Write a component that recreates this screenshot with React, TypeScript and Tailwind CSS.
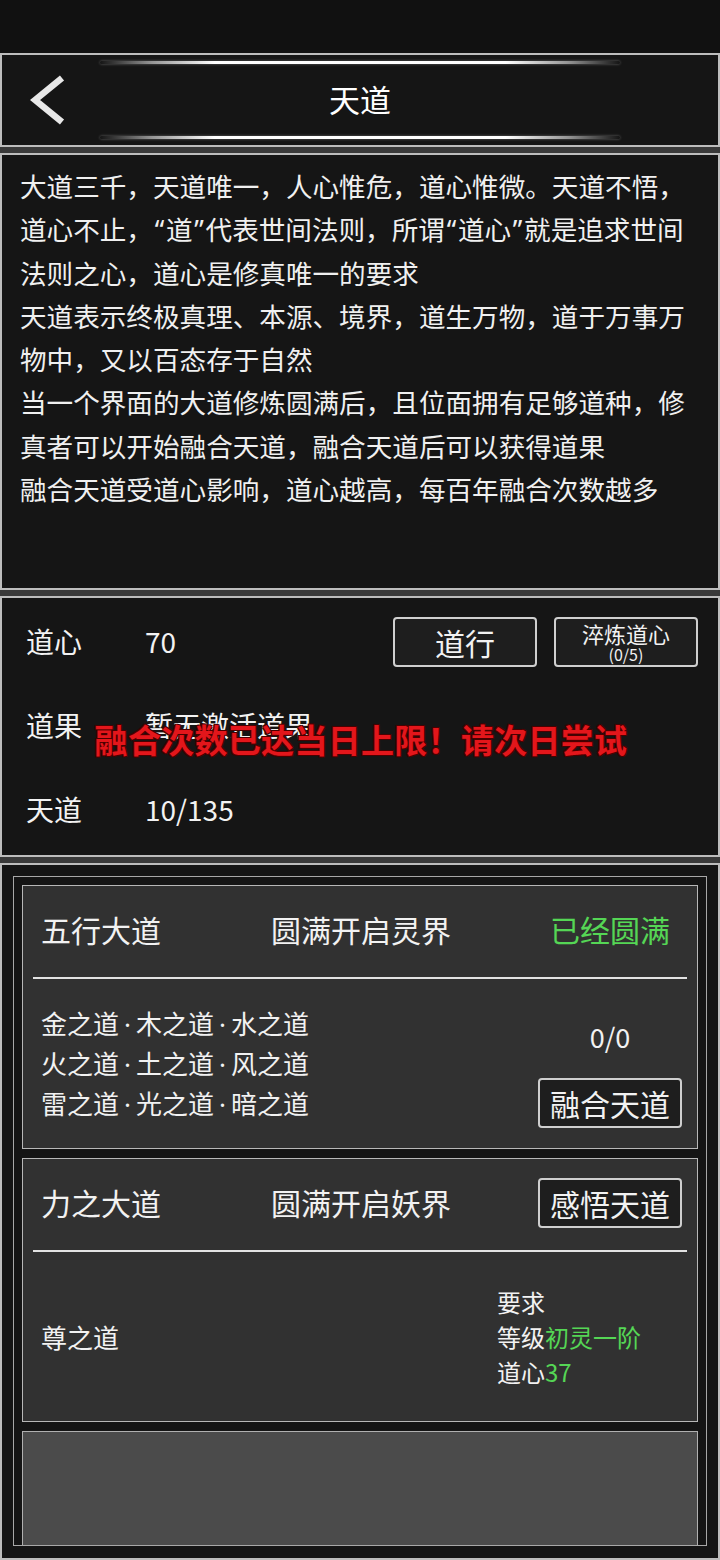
import React from "react";

// Narrow punctuation (curly quotes, middle dot) drawn at a fixed narrow width
function Half({ c, w }: { c: string; w: "q" | "d" }) {
  return (
    <span
      className={
        "inline-block text-center font-['Noto_Sans',sans-serif] leading-none " + (w === "q" ? "w-[13px]" : "w-[17px]")
      }
    >
      {c}
    </span>
  );
}

function withHalfPunct(s: string) {
  const out: React.ReactNode[] = [];
  let buf = "";
  let k = 0;
  for (const ch of s) {
    if (ch === "“" || ch === "”" || ch === "·") {
      if (buf) out.push(buf);
      buf = "";
      out.push(<Half key={k++} c={ch} w={ch === "·" ? "d" : "q"} />);
    } else {
      buf += ch;
    }
  }
  if (buf) out.push(buf);
  return out;
}

const bodyLines = [
  "大道三千，天道唯一，人心惟危，道心惟微。天道不悟，",
  "道心不止，“道”代表世间法则，所谓“道心”就是追求世间",
  "法则之心，道心是修真唯一的要求",
  "天道表示终极真理、本源、境界，道生万物，道于万事万",
  "物中，又以百态存于自然",
  "当一个界面的大道修炼圆满后，且位面拥有足够道种，修",
  "真者可以开始融合天道，融合天道后可以获得道果",
  "融合天道受道心影响，道心越高，每百年融合次数越多",
];

function GlowLine() {
  return (
    <div className="h-[3px] w-[520px] rounded-full bg-[linear-gradient(90deg,rgba(255,255,255,0)_0%,rgba(255,255,255,0.55)_10%,#ffffff_22%,#ffffff_78%,rgba(255,255,255,0.55)_90%,rgba(255,255,255,0)_100%)] shadow-[0_0_3px_rgba(255,255,255,0.35)]" />
  );
}

function FrameButton({ children, className = "" }: { children: React.ReactNode; className?: string }) {
  return (
    <div
      className={
        "flex h-[50px] w-[144px] flex-col items-center justify-center rounded-[4px] border-2 border-[#cfcfcf] bg-[#1e1e1e] text-[#f2f2f2] " +
        className
      }
    >
      {children}
    </div>
  );
}

function Card({ children }: { children: React.ReactNode }) {
  return (
    <div className="flex h-[264px] shrink-0 flex-col border border-[#b8b8b8] bg-[#313131]">{children}</div>
  );
}

export default function App() {
  return (
    <div className="h-[1560px] w-[720px] overflow-hidden bg-[#111111] font-['Noto_Sans_CJK_SC','Noto_Sans',sans-serif] text-[#f2f2f2]">
      <div className="h-[53px]" />
      <div className="flex flex-col gap-[6px] bg-[#3a3a3a]">
        {/* header bar */}
        <section className="flex h-[94px] flex-col items-center justify-between border-2 border-[#bdbdbd] bg-[#151515] pb-[6px] pt-[6px]">
          <GlowLine />
          <div className="grid w-full flex-1 grid-cols-[1fr_auto_1fr] items-center">
            <div className="pl-[28px]">
              <svg width="36" height="50" viewBox="0 0 36 50">
                <polyline points="32,3 5,25 32,47" fill="none" stroke="#e8e8e8" strokeWidth="6.5" strokeLinejoin="miter" />
              </svg>
            </div>
            <div className="pb-[2px] text-[31px] leading-[40px] text-white">天道</div>
            <div />
          </div>
          <GlowLine />
        </section>

        {/* description */}
        <section className="h-[437px] border-2 border-[#bdbdbd] bg-[#151515] px-[18px] pt-[9px] text-[26.6px] leading-[43.3px] text-[#f0f0f0]">
          {bodyLines.map((l) => (
            <div key={l} className="h-[43.3px] whitespace-nowrap">
              {withHalfPunct(l)}
            </div>
          ))}
        </section>

        {/* stats */}
        <section className="relative h-[261px] border-2 border-[#bdbdbd] bg-[#151515] pt-[1px] text-[28px]">
          <div className="flex h-[84px] items-center pl-[24px] pr-[20px]">
            <div className="w-[119px]">道心</div>
            <div className="flex-1">70</div>
            <div className="flex gap-[17px] pt-[2px]">
              <FrameButton className="text-[30px] leading-none">道行</FrameButton>
              <FrameButton>
                <span className="text-[22px] leading-[24px]">淬炼道心</span>
                <span className="text-[16px] leading-[18px]">(0/5)</span>
              </FrameButton>
            </div>
          </div>
          <div className="flex h-[84px] items-center pl-[24px] pr-[20px]">
            <div className="w-[119px]">道果</div>
            <div className="flex-1">暂无激活道果</div>
          </div>
          <div className="flex h-[84px] items-center pl-[24px] pr-[20px]">
            <div className="w-[119px]">天道</div>
            <div className="flex-1">10/135</div>
          </div>
          <div className="absolute left-0 right-0 top-[121px] pl-[2px] text-center text-[33px] font-bold leading-[40px] tracking-[0.3px] text-[#e3161b] [text-shadow:1px_1px_0_#4a0000,-1px_-1px_0_#4a0000,1px_-1px_0_#4a0000,-1px_1px_0_#4a0000]">
            融合次数已达当日上限！请次日尝试
          </div>
        </section>

        {/* dao list */}
        <section className="h-[697px] border-2 border-[#bdbdbd] bg-[#151515] px-[11px] pt-[11px]">
          <div className="flex h-[670px] flex-col gap-[9px] overflow-hidden border border-[#a8a8a8] px-[8px] pt-[8px]">
            <Card>
              <div className="flex h-[91px] items-center pb-[4px] pl-[18px] pr-[15px] text-[30px]">
                <div className="w-[230px]">五行大道</div>
                <div className="flex-1">圆满开启灵界</div>
                <div className="w-[144px] text-center text-[#55d655]">已经圆满</div>
              </div>
              <div className="mx-[10px] h-[1.5px] bg-[#e2e2e2]" />
              <div className="flex flex-1 items-center justify-between pl-[18px] pr-[15px]">
                <div className="text-[26px] leading-[40px]">
                  <div className="h-[40px]">{withHalfPunct("金之道·木之道·水之道")}</div>
                  <div className="h-[40px]">{withHalfPunct("火之道·土之道·风之道")}</div>
                  <div className="h-[40px]">{withHalfPunct("雷之道·光之道·暗之道")}</div>
                </div>
                <div className="flex w-[144px] flex-col items-center pt-[22px]">
                  <div className="text-[27px] leading-[34px]">0/0</div>
                  <FrameButton className="mt-[24px] text-[30px] leading-none">融合天道</FrameButton>
                </div>
              </div>
            </Card>

            <Card>
              <div className="flex h-[91px] items-center pb-[4px] pl-[18px] pr-[15px] text-[30px]">
                <div className="w-[230px]">力之大道</div>
                <div className="flex-1">圆满开启妖界</div>
                <FrameButton className="text-[30px] leading-none">感悟天道</FrameButton>
              </div>
              <div className="mx-[10px] h-[1.5px] bg-[#e2e2e2]" />
              <div className="flex flex-1 items-center pl-[18px] pr-[15px]">
                <div className="flex-1 text-[26px]">尊之道</div>
                <div className="w-[185px] text-[24px] leading-[35px]">
                  <div>要求</div>
                  <div>
                    等级<span className="text-[#55d655]">初灵一阶</span>
                  </div>
                  <div>
                    道心<span className="text-[#55d655]">37</span>
                  </div>
                </div>
              </div>
            </Card>

            <div className="h-[264px] shrink-0 border border-[#b0b0b0] bg-[#4b4b4b]" />
          </div>
        </section>
      </div>
    </div>
  );
}
